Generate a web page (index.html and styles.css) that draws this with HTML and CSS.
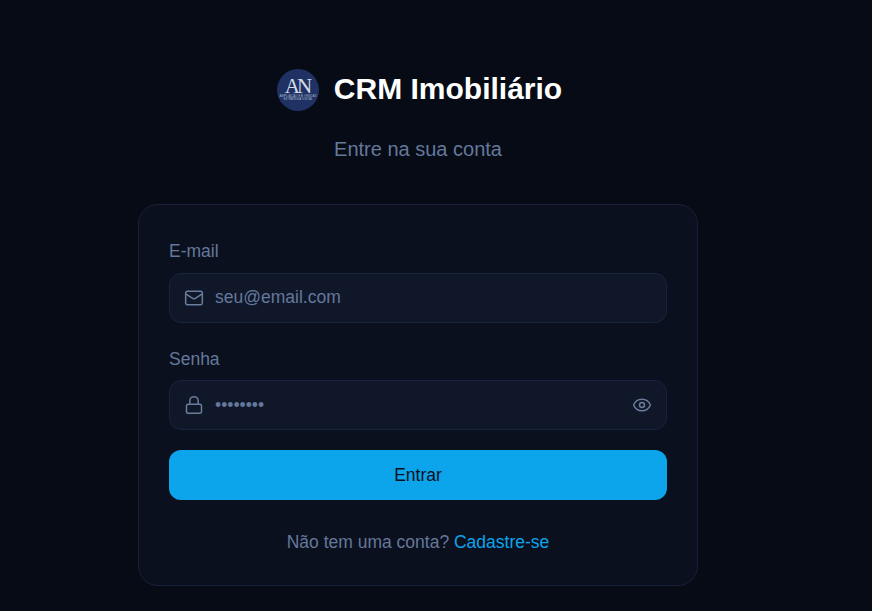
FILE: index.html
```html
<!DOCTYPE html>
<html lang="en">
<head>
  <meta charset="UTF-8">
  <meta name="viewport" content="width=device-width, initial-scale=1.0">
  <title>CRM Imobiliário</title>
  <link rel="stylesheet" href="styles.css">
</head>
<body>
  <div class="container">
    <div class="header">
      <div class="brand">
        <svg class="logo" width="42" height="42" viewBox="0 0 42 42">
          <circle cx="21" cy="21" r="21" fill="#1f3263"/>
          <text x="20" y="23.5" text-anchor="middle" class="logo-letters">AN</text>
          <text x="21" y="27.5" text-anchor="middle" textLength="37" class="logo-small">AMPLIAÇÃO EM VENDAS</text>
          <text x="21" y="31" text-anchor="middle" textLength="29" class="logo-small">ESTRATÉGIA DIGITAL</text>
        </svg>
        <h1>CRM Imobiliário</h1>
      </div>
      <p class="subtitle">Entre na sua conta</p>
    </div>

    <form class="card">
      <div class="input-group">
        <label for="email">E-mail</label>
        <div class="input-wrap">
          <svg class="icon" width="20" height="20" viewBox="0 0 24 24">
            <rect x="2" y="4" width="20" height="16" rx="2"/>
            <path d="m22 7-8.97 5.7a1.94 1.94 0 0 1-2.06 0L2 7"/>
          </svg>
          <input id="email" type="email" class="input-field" placeholder="seu@email.com">
        </div>
      </div>
      <div class="input-group">
        <label for="password" class="label-senha">Senha</label>
        <div class="input-wrap">
          <svg class="icon" width="20" height="20" viewBox="0 0 24 24">
            <rect x="3" y="11" width="18" height="11" rx="2"/>
            <path d="M7 11V7a5 5 0 0 1 10 0v4"/>
          </svg>
          <input id="password" type="password" class="input-field" placeholder="••••••••">
          <svg class="icon" width="20" height="20" viewBox="0 0 24 24">
            <path d="M2.06 12.35a1 1 0 0 1 0-.7 10.75 10.75 0 0 1 19.88 0 1 1 0 0 1 0 .7 10.75 10.75 0 0 1-19.88 0"/>
            <circle cx="12" cy="12" r="3"/>
          </svg>
        </div>
      </div>
      <button type="button" class="button">Entrar</button>
      <p class="signup">Não tem uma conta? <a href="#">Cadastre-se</a></p>
    </form>
  </div>
</body>
</html>
```

FILE: styles.css
```css
body {
  margin: 0;
  min-height: 611px;
  background-color: #060b16;
  font-family: "Liberation Sans", Arial, sans-serif;
  overflow: hidden;
}

.container {
  width: 560px;
  margin-left: 138px;
  padding-top: 69px;
}

.header {
  text-align: center;
  margin-bottom: 43px;
}

.brand {
  display: flex;
  justify-content: center;
  align-items: center;
  gap: 15px;
  height: 42px;
  padding-left: 3px;
}

.logo {
  flex-shrink: 0;
}

.logo-letters {
  font-family: "Liberation Serif", serif;
  font-size: 21px;
  letter-spacing: -3px;
  fill: #d5dbea;
}

.logo-small {
  font-family: "Liberation Sans", sans-serif;
  font-size: 2.6px;
  fill: #b4c0d8;
}

h1 {
  margin: 0 0 2px;
  font-size: 30px;
  line-height: 40px;
  font-weight: bold;
  color: #ffffff;
}

.subtitle {
  margin: 26px 0 0;
  font-size: 20px;
  line-height: 24px;
  color: #64789b;
}

.card {
  display: flex;
  flex-direction: column;
  padding: 31px 30px 30px;
  background-color: #0b101e;
  border: 1px solid #18213b;
  border-radius: 20px;
}

.input-group {
  display: flex;
  flex-direction: column;
  margin-bottom: 20px;
}

label {
  font-size: 17.5px;
  line-height: 24px;
  margin: 3px 0 10px;
  color: #64789b;
}

.label-senha {
  margin: 4px 0 9px;
}

.input-wrap {
  display: flex;
  align-items: center;
  gap: 11px;
  height: 48px;
  padding: 0 14px;
  background-color: #0f1729;
  border: 1px solid #18233e;
  border-radius: 12px;
}

.icon {
  flex-shrink: 0;
  fill: none;
  stroke: #6b7d9c;
  stroke-width: 1.8;
  stroke-linecap: round;
  stroke-linejoin: round;
}

.input-field {
  flex: 1;
  min-width: 0;
  padding: 0;
  border: none;
  outline: none;
  background: transparent;
  font-family: inherit;
  font-size: 17.5px;
  color: #64789b;
}

#email {
  padding-bottom: 2px;
}

.input-field::placeholder {
  color: #64789b;
  opacity: 1;
}

.button {
  height: 50px;
  padding: 0;
  border: none;
  border-radius: 12px;
  background-color: #0ca4ea;
  color: #0b101e;
  font-family: inherit;
  font-size: 17.5px;
  cursor: pointer;
}

.signup {
  margin: 29px 0 0;
  text-align: center;
  font-size: 17.5px;
  line-height: 26px;
  color: #64789b;
}

.signup a {
  color: #0ca4ea;
  text-decoration: none;
}
```
